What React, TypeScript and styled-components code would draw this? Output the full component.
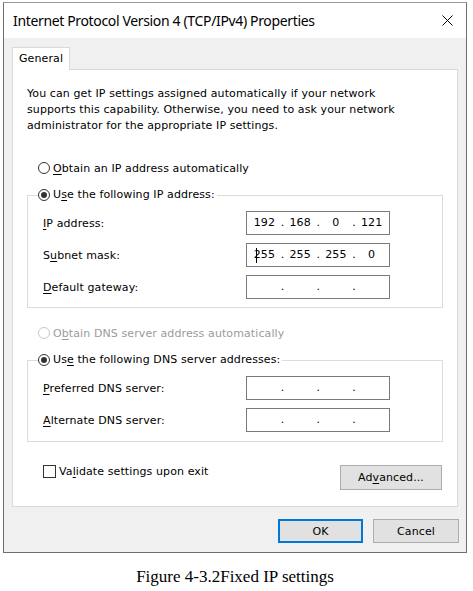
import React from "react";
import styled, { createGlobalStyle } from "styled-components";

const GlobalStyle = createGlobalStyle`
  html, body {
    margin: 0;
    padding: 0;
    background: #ffffff;
  }
  body {
    font-family: "DejaVu Sans", "Noto Sans", sans-serif;
    font-size: 11px;
    letter-spacing: 0.1px;
    color: #000000;
  }
`;

const Page = styled.div`
  width: 473px;
  height: 591px;
  padding: 2px 0 0 3px;
  box-sizing: border-box;
  background: #ffffff;
`;

const Window = styled.div`
  width: 464px;
  box-sizing: border-box;
  border: 1px solid #6e6e6e;
  border-top-color: #9a9a9a;
  background: #f0f0f0;
`;

const TitleBar = styled.div`
  height: 35px;
  background: #ffffff;
  display: flex;
  align-items: center;
  justify-content: space-between;
  padding: 0 13px 0 9px;
`;

const Title = styled.span`
  font-family: "Noto Sans", sans-serif;
  font-size: 14px;
  color: #000000;
  letter-spacing: -0.35px;
`;

const Body = styled.div`
  padding: 9px 8px 9px 8px;
  display: flex;
  flex-direction: column;
`;

const TabRow = styled.div`
  display: flex;
`;

const Tab = styled.div`
  height: 23px;
  width: 58px;
  box-sizing: border-box;
  border: 1px solid #d9d9d9;
  border-bottom: none;
  background: #ffffff;
  margin-bottom: -1px;
  position: relative;
  z-index: 1;
  padding: 4px 0 0 6px;
`;

const Panel = styled.div`
  background: #ffffff;
  border: 1px solid #d9d9d9;
  padding: 16px 14px 16px 14px;
  display: flex;
  flex-direction: column;
`;

const Intro = styled.p`
  margin: 0;
  line-height: 16px;
`;

const Key = styled.span`
  text-decoration: underline;
  text-underline-offset: 2px;
`;

const OptionRow = styled.label<{ $top: number; $indent?: number; $disabled?: boolean }>`
  display: flex;
  align-items: center;
  height: 16px;
  margin-top: ${(p) => p.$top}px;
  margin-left: ${(p) => p.$indent ?? 0}px;
  color: ${(p) => (p.$disabled ? "#9b9b9b" : "#000000")};
  gap: 3px;
`;

const Radio = styled.span<{ $checked?: boolean; $disabled?: boolean }>`
  width: 12px;
  height: 12px;
  box-sizing: border-box;
  border-radius: 50%;
  border: 1px solid ${(p) => (p.$disabled ? "#c8c8c8" : "#333333")};
  display: flex;
  align-items: center;
  justify-content: center;
  flex: none;
  &::after {
    content: "";
    width: 6px;
    height: 6px;
    border-radius: 50%;
    background: #333333;
    display: ${(p) => (p.$checked ? "block" : "none")};
  }
`;

const Check = styled.span`
  width: 13px;
  height: 13px;
  box-sizing: border-box;
  border: 1px solid #333333;
  background: #ffffff;
  flex: none;
`;

const Group = styled.fieldset<{ $top: number; $bottom: number }>`
  margin: ${(p) => p.$top}px 0 0 0;
  padding: 8px 52px ${(p) => p.$bottom}px 15px;
  border: 1px solid #dcdcdc;
  min-inline-size: 0;
  display: flex;
  flex-direction: column;
  gap: 8px;
`;

const Legend = styled.legend`
  padding: 0 2px 0 0;
  margin-left: -5px;
  height: 16px;
  line-height: 16px;
  background: #ffffff;
`;

const FieldRow = styled.div`
  display: flex;
  align-items: center;
  justify-content: space-between;
  height: 24px;
`;

const IpBox = styled.div`
  width: 144px;
  height: 24px;
  box-sizing: border-box;
  border: 1px solid #7a7a7a;
  background: #ffffff;
  display: grid;
  grid-template-columns: 1fr 3px 1fr 3px 1fr 3px 1fr;
  align-items: center;
  padding: 0 1px;
  position: relative;
`;

const Octet = styled.span`
  text-align: center;
  line-height: 20px;
`;

const Dot = styled.span`
  text-align: center;
  line-height: 20px;
`;

const Caret = styled.span`
  position: absolute;
  left: 9px;
  top: 4px;
  width: 1px;
  height: 15px;
  background: #000000;
`;

const BottomRow = styled.div`
  margin-top: 23px;
  display: flex;
  align-items: flex-start;
  justify-content: space-between;
  padding: 0 1px 0 16px;
`;

const CheckRow = styled.label`
  display: flex;
  align-items: center;
  gap: 3px;
  height: 13px;
`;

const Button = styled.button<{ $w: number; $h?: number; $default?: boolean }>`
  width: ${(p) => p.$w}px;
  height: ${(p) => p.$h ?? 24}px;
  box-sizing: border-box;
  background: #e1e1e1;
  border: 1px solid ${(p) => (p.$default ? "#0078d7" : "#adadad")};
  box-shadow: ${(p) => (p.$default ? "inset 0 0 0 1px #0078d7" : "none")};
  font-family: "DejaVu Sans", "Noto Sans", sans-serif;
  font-size: 11px;
  letter-spacing: 0.1px;
  color: #000000;
  padding: 0;
  border-radius: 0;
`;

const ActionRow = styled.div`
  margin-top: 12px;
  margin-right: -1px;
  display: flex;
  justify-content: flex-end;
  gap: 10px;
`;

const Caption = styled.div`
  width: 464px;
  margin-top: 14px;
  text-align: center;
  font-family: "Liberation Serif", "DejaVu Serif", serif;
  font-size: 17px;
  line-height: 20px;
  letter-spacing: 0;
  color: #000000;
`;

const CloseIcon = () => (
  <svg width="11" height="11" viewBox="0 0 11 11">
    <path d="M0.5 0.5 L10.5 10.5 M10.5 0.5 L0.5 10.5" stroke="#000" strokeWidth="1" fill="none" />
  </svg>
);

const IpField = ({ value, caret }: { value?: string[]; caret?: boolean }) => {
  const parts = value ?? ["", "", "", ""];
  return (
    <IpBox>
      {caret && <Caret />}
      <Octet>{parts[0]}</Octet>
      <Dot>.</Dot>
      <Octet>{parts[1]}</Octet>
      <Dot>.</Dot>
      <Octet>{parts[2]}</Octet>
      <Dot>.</Dot>
      <Octet>{parts[3]}</Octet>
    </IpBox>
  );
};

export default function App() {
  return (
    <Page>
      <GlobalStyle />
      <Window>
        <TitleBar>
          <Title>Internet Protocol Version 4 (TCP/IPv4) Properties</Title>
          <CloseIcon />
        </TitleBar>
        <Body>
          <TabRow>
            <Tab>General</Tab>
          </TabRow>
          <Panel>
            <Intro>
              You can get IP settings assigned automatically if your network
              <br />
              supports this capability. Otherwise, you need to ask your network
              <br />
              administrator for the appropriate IP settings.
            </Intro>

            <OptionRow $top={26} $indent={11}>
              <Radio />
              <span>
                <Key>O</Key>btain an IP address automatically
              </span>
            </OptionRow>

            <Group $top={11} $bottom={8}>
              <Legend>
                <OptionRow $top={0}>
                  <Radio $checked />
                  <span>
                    U<Key>s</Key>e the following IP address:
                  </span>
                </OptionRow>
              </Legend>
              <FieldRow>
                <span>
                  <Key>I</Key>P address:
                </span>
                <IpField value={["192", "168", "0", "121"]} />
              </FieldRow>
              <FieldRow>
                <span>
                  S<Key>u</Key>bnet mask:
                </span>
                <IpField value={["255", "255", "255", "0"]} caret />
              </FieldRow>
              <FieldRow>
                <span>
                  <Key>D</Key>efault gateway:
                </span>
                <IpField />
              </FieldRow>
            </Group>

            <OptionRow $top={17} $indent={11} $disabled>
              <Radio $disabled />
              <span>
                O<Key>b</Key>tain DNS server address automatically
              </span>
            </OptionRow>

            <Group $top={11} $bottom={9}>
              <Legend>
                <OptionRow $top={0}>
                  <Radio $checked />
                  <span>
                    Us<Key>e</Key> the following DNS server addresses:
                  </span>
                </OptionRow>
              </Legend>
              <FieldRow>
                <span>
                  <Key>P</Key>referred DNS server:
                </span>
                <IpField />
              </FieldRow>
              <FieldRow>
                <span>
                  <Key>A</Key>lternate DNS server:
                </span>
                <IpField />
              </FieldRow>
            </Group>

            <BottomRow>
              <CheckRow>
                <Check />
                <span>
                  Va<Key>l</Key>idate settings upon exit
                </span>
              </CheckRow>
              <Button $w={102} $h={25}>
                Ad<Key>v</Key>anced...
              </Button>
            </BottomRow>
          </Panel>
          <ActionRow>
            <Button $w={85} $default>
              OK
            </Button>
            <Button $w={86}>Cancel</Button>
          </ActionRow>
        </Body>
      </Window>
      <Caption>Figure 4-3.2Fixed IP settings</Caption>
    </Page>
  );
}
